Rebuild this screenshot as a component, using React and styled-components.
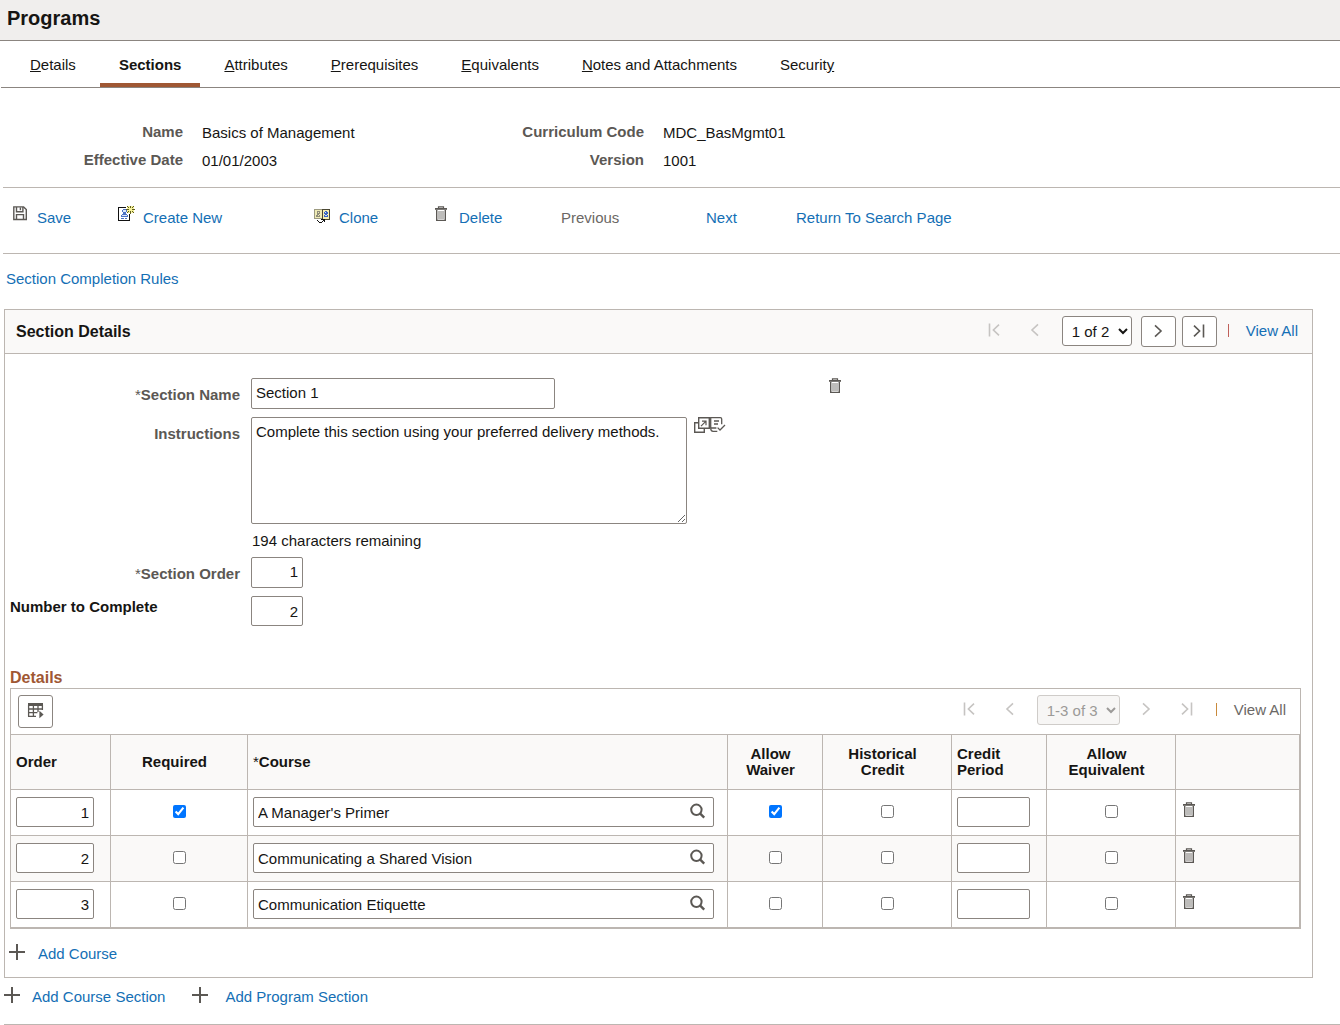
import { useState } from 'react';
import styled, { createGlobalStyle } from 'styled-components';

const GlobalStyle = createGlobalStyle`
	* {
		box-sizing: border-box;
	}
	body {
		margin: 0;
		background: #fff;
		color: #161513;
	}
	body, input, select, textarea, button {
		font-family: "Liberation Sans", Arial, sans-serif;
		font-size: 15px;
	}
	svg {
		display: block;
		flex: none;
	}
`;

const Page = styled.div`
	min-width: 1200px;
`;
const Header = styled.header`
	height: 41px;
	padding: 0 7px;
	background: #f0eeed;
	border-bottom: 1px solid #8b8580;
`;
const Title = styled.h1`
	margin: 0;
	font-size: 20px;
	line-height: 36px;
`;
const Tabs = styled.nav`
	display: flex;
	gap: 5px;
	margin-left: 1px;
	padding-left: 10px;
	border-bottom: 1px solid #8b8580;
`;
const Tab = styled.a`
	height: 46px;
	padding: 0 19px;
	line-height: 48px;
	color: #161513;
	text-decoration: none;
	font-weight: ${(props) => (props.$active ? 'bold' : 'normal')};
	box-shadow: ${(props) => (props.$active ? 'inset 0 -4px #9f5733' : 'none')};
	white-space: nowrap;
`;
const Info = styled.dl`
	display: grid;
	grid-template-columns: 180px 243px 180px 1fr;
	column-gap: 19px;
	margin: 0 0 0 3px;
	padding: 30px 0 13px;
	line-height: 28px;
	border-bottom: 1px solid #bcb6b1;
`;
const InfoLabel = styled.dt`
	font-weight: bold;
	color: #5b5854;
	text-align: right;
`;
const InfoValue = styled.dd`
	margin: 0;
	padding-top: 1px;
	height: 28px;
`;
const ActionBar = styled.div`
	display: grid;
	grid-template-columns: 105px 196px 121px 126px 145px 90px 1fr;
	margin-left: 3px;
	padding: 18px 0 25px 10px;
	border-bottom: 1px solid #bcb6b1;
`;
const Action = styled.div`
	display: flex;
	gap: ${(props) => props.$gap || 10}px;
	line-height: 20px;

	a, span {
		padding-top: 2px;
	}
`;
const Link = styled.a`
	color: #146fb5;
	text-decoration: none;
	line-height: 20px;
	white-space: nowrap;
`;
const Muted = styled.span`
	color: #6b6865;
	line-height: 20px;
	white-space: nowrap;
`;
const RulesRow = styled.div`
	display: flex;
	padding: 15px 6px 20px;
`;
const Panel = styled.section`
	margin: 0 27px 0 4px;
	border: 1px solid #bcb6b1;
`;
const PanelHeader = styled.div`
	display: flex;
	align-items: center;
	justify-content: space-between;
	height: 44px;
	padding: 0 14px 0 11px;
	background: #faf9f8;
	border-bottom: 1px solid #bcb6b1;
`;
const PanelTitle = styled.h2`
	margin: 0;
	font-size: 16px;
`;
const Pager = styled.div`
	display: flex;
	align-items: flex-start;
	gap: 6px;

	${Link}, ${Muted} {
		line-height: 30px;
	}
`;
const PagerButton = styled.button`
	display: flex;
	align-items: center;
	justify-content: center;
	width: 35px;
	height: 31px;
	padding: 0 0 2px;
	color: #5b5854;
	background: #fff;
	border: 1px solid #8b8580;
	border-radius: 3px;

	&:disabled {
		padding-bottom: 4px;
		color: #c6c4c2;
		background: transparent;
		border-color: transparent;
	}
`;
const PagerSelect = styled.select`
	width: ${(props) => props.$width}px;
	height: 30px;
	margin: 0 3px;
	padding: 0 0 0 5px;
	color: #161513;
	background: #fff;
	border: 1px solid #8b8580;
	border-radius: 3px;

	&:disabled {
		color: #9c9a98;
		background: #f7f6f5;
		border-color: #cfccc9;
		opacity: 1;
	}
`;
const Divider = styled.span`
	width: 1px;
	height: 13px;
	margin: 8px 11px 0 5px;
	background: ${(props) => props.$color};
`;
const Form = styled.div`
	display: grid;
	grid-template-columns: 235px 1fr;
	gap: 8px 11px;
	padding-top: 24px;
`;
const Label = styled.label`
	padding-top: 8px;
	font-weight: bold;
	line-height: 18px;
	color: #5b5854;
	text-align: right;
`;
const PlainLabel = styled(Label)`
	padding: 2px 0 0 5px;
	color: #161513;
	text-align: left;
`;
const Star = styled.span`
	font-weight: normal;
`;
const Field = styled.div`
	display: flex;
	align-items: flex-start;
`;
const Input = styled.input`
	display: block;
	width: ${(props) => props.$width}px;
	height: 30px;
	padding: 0 4px;
	text-align: ${(props) => props.$align || 'left'};
	color: #161513;
	background: #fff;
	border: 1px solid #8b8580;
	border-radius: 2px;
`;
const FormInput = styled(Input)`
	height: 31px;
	padding-bottom: 2px;
`;
const Textarea = styled.textarea`
	width: 436px;
	height: 107px;
	padding: 5px 4px;
	line-height: 17px;
	color: #161513;
	border: 1px solid #8b8580;
	border-radius: 2px;
`;
const Hint = styled.div`
	padding: 9px 1px 0;
	line-height: 16px;
`;
const IconButton = styled.button`
	display: flex;
	padding: 0;
	background: none;
	border: none;
`;
const RowDelete = styled(IconButton)`
	margin-left: 274px;
`;
const FieldTools = styled.div`
	display: flex;
	padding-left: 7px;
`;
const GridTitle = styled.h3`
	margin: 42px 0 0 5px;
	font-size: 16px;
	line-height: 20px;
	color: #9f5733;
`;
const GridBox = styled.div`
	margin: 0 11px 0 5px;
	border: 1px solid #bcb6b1;
`;
const GridToolbar = styled.div`
	display: flex;
	align-items: flex-start;
	justify-content: space-between;
	height: 46px;
	padding: 6px 14px 0 7px;
	border-bottom: 1px solid #bcb6b1;
`;
const GridMenu = styled(PagerButton)`
	height: 33px;
`;
const Table = styled.table`
	width: 100%;
	table-layout: fixed;
	border-collapse: separate;
	border-spacing: 0;
`;
const Th = styled.th`
	width: ${(props) => (props.$width ? `${props.$width}px` : 'auto')};
	height: 55px;
	padding: ${(props) => (props.$center ? '0 14px 0 5px' : '0 5px')};
	line-height: 16px;
	text-align: ${(props) => (props.$center ? 'center' : 'left')};
	background: #faf9f8;
	border: solid #bcb6b1;
	border-width: 0 1px 1px 0;
`;
const Row = styled.tr`
	&:nth-child(even) {
		background: #faf9f8;
	}
`;
const Td = styled.td`
	height: 46px;
	padding: 7px 5px 0;
	vertical-align: top;
	border: solid #bcb6b1;
	border-width: 0 1px 1px 0;
`;
const Checkbox = styled.input`
	display: block;
	width: 13px;
	height: 13px;
	margin: 8px auto 0;
`;
const Lookup = styled.div`
	display: flex;
	align-items: center;
	width: 461px;
	height: 30px;
	padding-right: 7px;
	background: #fff;
	border: 1px solid #8b8580;
	border-radius: 2px;

	input {
		flex: 1;
		height: 28px;
		padding: 0 4px;
		color: #161513;
		background: none;
		border: none;
	}

	button {
		padding-bottom: 2px;
	}
`;
const TrashCell = styled.div`
	padding: 5px 0 0 2px;
`;
const AddCourse = styled.div`
	display: flex;
	gap: 13px;
	padding: 15px 0 13px 4px;
`;
const Footer = styled.div`
	display: flex;
	gap: 27px;
	margin-left: 4px;
	padding: 9px 0 17px;
	border-bottom: 1px solid #bcb6b1;
`;
const AddSection = styled.div`
	display: flex;
	gap: ${(props) => props.$gap}px;
`;

const TrashIcon = () => (
	<svg width="12" height="16" viewBox="0 0 12 16" fill="none" stroke="#5b5854">
		<path d="M0 2.9h12" strokeWidth="1.8" />
		<path d="M3.5 2V.8h5V2" strokeWidth="1.2" />
		<path d="M1.7 4v10.4h8.6V4" strokeWidth="1.4" />
		<path d="M4 5v8M6 5v8M8 5v8" strokeWidth=".8" />
	</svg>
);
const SaveIcon = () => (
	<svg width="14" height="15" viewBox="0 0 14 15" fill="none" stroke="#5b5854" strokeWidth="1.4">
		<path d="M.8.9h9.8l2.7 2.7v9.9H.8z" />
		<path d="M3.5.9v4.9h6.4V.9M3.5 13.4V8.6h7v4.8" />
		<path d="M7.4 1.4v2.8" />
	</svg>
);
const CreateIcon = () => (
	<svg width="17" height="16" viewBox="0 0 17 16" shapeRendering="crispEdges">
		<path d="M1 2h10v12H1z" fill="#fff" />
		<path d="M0 1h8v1H1v12h10V8h1v7H0z" fill="#111" />
		<path d="M5 3h3v1h1v2H8v2h1v1h1v2H3V9h1V8h1V6H4V4h1z" fill="#4c72c4" />
		<path d="M5 4h3v2H5zM4 9h5v1H4z" fill="#dbe7fb" />
		<path d="M3 12h3v1H3zM7 12h2v1H7z" fill="#4c72c4" />
		<path d="M9 0h7v7H9z" fill="#f6f29a" />
		<path d="M12 0h1v2h-1zM12 5h1v3h-1zM8 3h3v1H8zM14 3h3v1h-3zM9 0h1v1H9zM15 0h1v1h-1zM10 1h1v1h-1zM14 1h1v1h-1zM10 5h1v1h-1zM14 5h1v1h-1zM9 6h1v1H9zM15 6h1v1h-1z" fill="#5f5c22" />
	</svg>
);
const CloneIcon = () => (
	<svg width="17" height="18" viewBox="0 -3 17 18" shapeRendering="crispEdges">
		<path d="M0 0h8v10H0z" fill="#9c9a80" />
		<path d="M1 1h7v8H1z" fill="#efebb5" />
		<path d="M8 0h8v11H8z" fill="#4a4733" />
		<path d="M9 1h6v9H9z" fill="#f5efb2" />
		<path d="M3 2h3v3H5v1h1v2H2V6h1V5h0z" fill="#8f8d78" />
		<path d="M4 3h1v1H4zM4 6h1v1H4z" fill="#efebb5" />
		<path d="M11 2h2v1h1v2h-1v1h1v2h-4V6h1V5h-1V3h1z" fill="#3865c4" />
		<path d="M11 3h1v1h-1zM11 6h2v1h-2z" fill="#cfe0fb" />
		<path d="M3 11h1v1H3zM4 12h1v1H4zM5 13h3v1H5zM8 12h1v1H8zM9 11h1v1H9zM7 10h4v1H7zM10 10h1v3h-1z" fill="#111" />
	</svg>
);
const PlusIcon = () => (
	<svg width="16" height="16" viewBox="0 0 16 16" stroke="#5b5854" strokeWidth="2">
		<path d="M8 0v16M0 8h16" />
	</svg>
);
const SearchIcon = () => (
	<svg width="16" height="16" viewBox="0 0 16 16" fill="none" stroke="#5b5854" strokeWidth="2">
		<circle cx="6.4" cy="6.8" r="5.2" />
		<path d="M10.2 10.6l4 4" strokeWidth="2.4" />
	</svg>
);
const Chevron = ({ flip, end }) => (
	<svg width="12" height="14" viewBox="0 0 12 14" fill="none" stroke="currentColor" strokeWidth="1.6">
		<g transform={flip ? 'translate(12 0) scale(-1 1)' : undefined}>
			{end ? <path d="M1 1.6l5.6 5.4L1 12.4M10.5.5v13" /> : <path d="M3 1.4l6 5.6-6 5.6" />}
		</g>
	</svg>
);
const GridIcon = () => (
	<svg width="17" height="17" viewBox="0 0 17 17" fill="none" stroke="#5b5854">
		<path d="M1 2.5h15" strokeWidth="3" />
		<path d="M1.6 3v11.4M6.4 3v11.4M11 3v7M15.4 3v5" strokeWidth="1.3" />
		<path d="M1 7h14.6M1 10.6h9.4M1 14.4h8" strokeWidth="1.3" />
		<path d="M12.4 8.8l4.2 3.7-4.2 3.7z" fill="#5b5854" stroke="none" />
	</svg>
);
const PopupIcon = () => (
	<svg width="16" height="17" viewBox="0 0 16 17" fill="none" stroke="#5b5854" strokeWidth="1.4">
		<path d="M4.7.7h10.6v10.6H4.7z" />
		<path d="M4.7 5.7h-4v9.6h9.6v-4" />
		<path d="M7 9.2l4.8-4.8M8 4.2h4v4" strokeWidth="1.2" />
	</svg>
);
const SpellIcon = () => (
	<svg width="16" height="17" viewBox="0 0 16 17" fill="none" stroke="#5b5854" strokeWidth="1.3">
		<path d="M.7 11V.7h9.6c1 0 1.4.6 1.4 1.4v5.2M.7 11c0 2 .6 3.4 2.4 3.4h4.2" />
		<path d="M4 4h5M4 7h4M1 11h5.4" />
		<path d="M7.6 10.6l2.4 2.4 5-5" />
	</svg>
);

const tabs = ['Details', 'Sections', 'Attributes', 'Prerequisites', 'Equivalents', 'Notes and Attachments'];

const initialCourses = [
	{ order: 1, course: "A Manager's Primer", required: true, waiver: true },
	{ order: 2, course: 'Communicating a Shared Vision', required: false, waiver: false },
	{ order: 3, course: 'Communication Etiquette', required: false, waiver: false },
];

function CourseRow({ item }) {
	return (
		<Row>
			<Td>
				<Input $width={78} $align="right" defaultValue={item.order} aria-label="Order" />
			</Td>
			<Td>
				<Checkbox type="checkbox" defaultChecked={item.required} aria-label="Required" />
			</Td>
			<Td>
				<Lookup>
					<input defaultValue={item.course} aria-label="Course" />
					<IconButton aria-label="Look up course">
						<SearchIcon />
					</IconButton>
				</Lookup>
			</Td>
			<Td>
				<Checkbox type="checkbox" defaultChecked={item.waiver} aria-label="Allow Waiver" />
			</Td>
			<Td>
				<Checkbox type="checkbox" aria-label="Historical Credit" />
			</Td>
			<Td>
				<Input $width={73} aria-label="Credit Period" />
			</Td>
			<Td>
				<Checkbox type="checkbox" aria-label="Allow Equivalent" />
			</Td>
			<Td>
				<TrashCell>
					<IconButton aria-label="Delete row">
						<TrashIcon />
					</IconButton>
				</TrashCell>
			</Td>
		</Row>
	);
}

function App() {
	const [instructions, setInstructions] = useState('Complete this section using your preferred delivery methods.');
	const remaining = 254 - instructions.length;

	return (
		<Page>
			<GlobalStyle />
			<Header>
				<Title>Programs</Title>
			</Header>
			<Tabs>
				{tabs.map((tab) =>
					tab === 'Sections' ? (
						<Tab href="#" key={tab} $active>
							{tab}
						</Tab>
					) : (
						<Tab href="#" key={tab}>
							<u>{tab[0]}</u>
							{tab.slice(1)}
						</Tab>
					)
				)}
				<Tab href="#">
					Securit<u>y</u>
				</Tab>
			</Tabs>
			<Info>
				<InfoLabel>Name</InfoLabel>
				<InfoValue>Basics of Management</InfoValue>
				<InfoLabel>Curriculum Code</InfoLabel>
				<InfoValue>MDC_BasMgmt01</InfoValue>
				<InfoLabel>Effective Date</InfoLabel>
				<InfoValue>01/01/2003</InfoValue>
				<InfoLabel>Version</InfoLabel>
				<InfoValue>1001</InfoValue>
			</Info>
			<ActionBar>
				<Action>
					<SaveIcon />
					<Link href="#">Save</Link>
				</Action>
				<Action $gap={8}>
					<CreateIcon />
					<Link href="#">Create New</Link>
				</Action>
				<Action $gap={8}>
					<CloneIcon />
					<Link href="#">Clone</Link>
				</Action>
				<Action $gap={12}>
					<TrashIcon />
					<Link href="#">Delete</Link>
				</Action>
				<Action>
					<Muted>Previous</Muted>
				</Action>
				<Action>
					<Link href="#">Next</Link>
				</Action>
				<Action>
					<Link href="#">Return To Search Page</Link>
				</Action>
			</ActionBar>
			<RulesRow>
				<Link href="#">Section Completion Rules</Link>
			</RulesRow>
			<Panel>
				<PanelHeader>
					<PanelTitle>Section Details</PanelTitle>
					<Pager>
						<PagerButton disabled aria-label="First section">
							<Chevron flip end />
						</PagerButton>
						<PagerButton disabled aria-label="Previous section">
							<Chevron flip />
						</PagerButton>
						<PagerSelect $width={70} aria-label="Section">
							<option>1 of 2</option>
							<option>2 of 2</option>
						</PagerSelect>
						<PagerButton aria-label="Next section">
							<Chevron />
						</PagerButton>
						<PagerButton aria-label="Last section">
							<Chevron end />
						</PagerButton>
						<Divider $color="#c0605a" />
						<Link href="#">View All</Link>
					</Pager>
				</PanelHeader>
				<Form>
					<Label htmlFor="section_name">
						<Star>*</Star>Section Name
					</Label>
					<Field>
						<FormInput id="section_name" $width={304} defaultValue="Section 1" />
						<RowDelete aria-label="Delete section">
							<TrashIcon />
						</RowDelete>
					</Field>
					<Label htmlFor="instructions">Instructions</Label>
					<div>
						<Field>
							<Textarea
								id="instructions"
								value={instructions}
								onChange={(e) => setInstructions(e.target.value)}
							/>
							<FieldTools>
								<IconButton aria-label="Expand">
									<PopupIcon />
								</IconButton>
								<IconButton aria-label="Spell check">
									<SpellIcon />
								</IconButton>
							</FieldTools>
						</Field>
						<Hint>{remaining} characters remaining</Hint>
					</div>
					<Label htmlFor="section_order">
						<Star>*</Star>Section Order
					</Label>
					<Field>
						<FormInput id="section_order" $width={52} $align="right" defaultValue="1" />
					</Field>
					<PlainLabel htmlFor="number_complete">Number to Complete</PlainLabel>
					<Field>
						<Input id="number_complete" $width={52} $align="right" defaultValue="2" />
					</Field>
				</Form>
				<GridTitle>Details</GridTitle>
				<GridBox>
					<GridToolbar>
						<GridMenu aria-label="Grid actions">
							<GridIcon />
						</GridMenu>
						<Pager>
							<PagerButton disabled aria-label="First rows">
								<Chevron flip end />
							</PagerButton>
							<PagerButton disabled aria-label="Previous rows">
								<Chevron flip />
							</PagerButton>
							<PagerSelect disabled $width={83} aria-label="Rows">
								<option>1-3 of 3</option>
							</PagerSelect>
							<PagerButton disabled aria-label="Next rows">
								<Chevron />
							</PagerButton>
							<PagerButton disabled aria-label="Last rows">
								<Chevron end />
							</PagerButton>
							<Divider $color="#c98a3c" />
							<Muted>View All</Muted>
						</Pager>
					</GridToolbar>
					<Table>
						<thead>
							<tr>
								<Th $width={100}>Order</Th>
								<Th $width={137} $center>
									Required
								</Th>
								<Th $width={480}>
									<Star>*</Star>Course
								</Th>
								<Th $width={95} $center>
									Allow Waiver
								</Th>
								<Th $width={129} $center>
									Historical Credit
								</Th>
								<Th $width={95}>
									Credit
									<br />
									Period
								</Th>
								<Th $width={129} $center>
									Allow Equivalent
								</Th>
								<Th />
							</tr>
						</thead>
						<tbody>
							{initialCourses.map((item) => (
								<CourseRow item={item} key={item.order} />
							))}
						</tbody>
					</Table>
				</GridBox>
				<AddCourse>
					<PlusIcon />
					<Link href="#">Add Course</Link>
				</AddCourse>
			</Panel>
			<Footer>
				<AddSection $gap={12}>
					<PlusIcon />
					<Link href="#">Add Course Section</Link>
				</AddSection>
				<AddSection $gap={17}>
					<PlusIcon />
					<Link href="#">Add Program Section</Link>
				</AddSection>
			</Footer>
		</Page>
	);
}
export default App;
